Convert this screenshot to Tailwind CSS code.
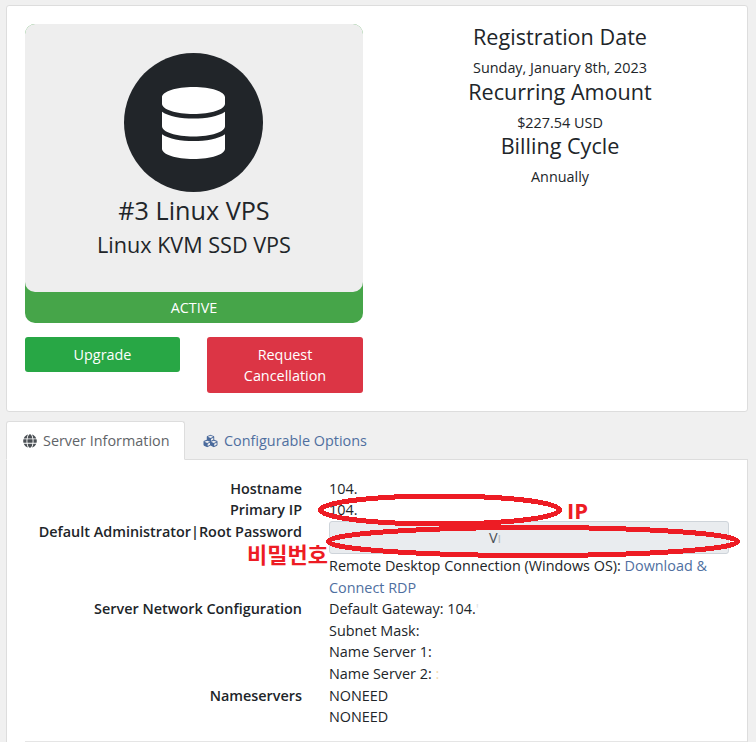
<!DOCTYPE html>
<html lang="en">
<head>
    <meta charset="UTF-8">
    <meta name="viewport" content="width=device-width, initial-scale=1.0">
    <script src="https://cdn.jsdelivr.net/npm/@tailwindcss/browser@4"></script>
    <title>Linux VPS</title>
</head>
<body class="bg-[#f0f0f0] font-['Open_Sans',sans-serif] text-[14.4px] leading-[21.6px] text-[#212529] overflow-hidden">
<div class="relative w-[756px] h-[742px] overflow-hidden pt-[5px] pl-[6px]">

    <!-- top card -->
    <div class="w-[742px] h-[407px] bg-white border border-[#ddd] rounded-[3px] pt-[18px] pl-[18px] flex">
        <div class="w-[338px]">
            <div class="bg-[#46a549] rounded-[10px] h-[299px]">
                <div class="h-[268px] bg-[#eeeeee] rounded-[10px] flex flex-col items-center pt-[29px]">
                    <div class="w-[139px] h-[139px] mr-[1px] rounded-full bg-[#212529] flex items-center justify-center">
                        <svg class="w-[63px] h-[72px] fill-white" viewBox="0 0 448 512"><path d="M448 73.143v45.714C448 159.143 347.667 192 224 192S0 159.143 0 118.857V73.143C0 32.857 100.333 0 224 0s224 32.857 224 73.143zM448 176v102.857C448 319.143 347.667 352 224 352S0 319.143 0 278.857V176c48.125 33.143 136.208 48.572 224 48.572S399.874 209.143 448 176zm0 160v102.857C448 479.143 347.667 512 224 512S0 479.143 0 438.857V336c48.125 33.143 136.208 48.572 224 48.572S399.874 369.143 448 336z"/></svg>
                    </div>
                    <div class="text-[25.2px] leading-[38px] mt-[-1px]">#3 Linux VPS</div>
                    <div class="text-[21.6px] leading-[30px] mt-[1px]">Linux KVM SSD VPS</div>
                </div>
                <div class="text-white text-center h-[31px] leading-[31px]">ACTIVE</div>
            </div>
            <div class="flex justify-between mt-[14px] text-white text-center">
                <div class="w-[155px] h-[35px] leading-[35px] bg-[#28a745] rounded-[3px]">Upgrade</div>
                <div class="w-[156px] h-[56px] pt-[7px] leading-[21px] bg-[#dc3545] rounded-[3px]">Request<br>Cancellation</div>
            </div>
        </div>
        <div class="w-[338px] ml-[28px] text-center">
            <div class="text-[21.6px] leading-[26px]">Registration Date</div>
            <div class="mt-[7px]">Sunday, January 8th, 2023</div>
            <div class="text-[21.6px] leading-[26px]">Recurring Amount</div>
            <div class="mt-[7px]">$227.54 USD</div>
            <div class="text-[21.6px] leading-[26px]">Billing Cycle</div>
            <div class="mt-[7px]">Annually</div>
        </div>
    </div>

    <!-- tabs -->
    <div class="flex h-[39px] mt-[9px] relative z-10">
        <div class="w-[179px] h-[39px] bg-white border border-[#ddd] border-b-white rounded-t-[3px] flex items-center pl-[16px] gap-[6px] text-[#5f6468]">
            <svg class="w-[14px] h-[14px] fill-[#4a4f54]" viewBox="0 0 496 512"><path d="M336.5 160C322 70.7 287.8 8 248 8s-74 62.7-88.5 152h177zM152 256c0 22.2 1.2 43.5 3.3 64h185.3c2.1-20.5 3.3-41.8 3.3-64s-1.2-43.5-3.3-64H155.3c-2.1 20.5-3.3 41.8-3.3 64zm324.7-96c-28.6-67.9-86.5-120.4-158-141.6 24.4 33.8 41.2 84.7 50 141.6h108zM177.2 18.4C105.8 39.6 47.8 92.1 19.3 160h108c8.7-56.9 25.5-107.8 49.9-141.6zM487.4 192H372.7c2.1 21 3.3 42.5 3.3 64s-1.2 43-3.3 64h114.6c5.5-20.5 8.6-41.8 8.6-64s-3.1-43.5-8.5-64zM120 256c0-21.5 1.2-43 3.3-64H8.6C3.2 212.5 0 233.8 0 256s3.2 43.5 8.6 64h114.6c-2-21-3.2-42.5-3.2-64zm39.5 96c14.5 89.3 48.7 152 88.5 152s74-62.7 88.5-152h-177zm159.3 141.6c71.4-21.2 129.4-73.7 158-141.6h-108c-8.8 56.9-25.6 107.8-50 141.6zM19.3 352c28.6 67.9 86.5 120.4 158 141.6-24.4-33.8-41.2-84.7-50-141.6h-108z"/></svg>
            <span>Server Information</span>
        </div>
        <div class="flex items-center pl-[18px] gap-[6px] text-[#4f6f9f]">
            <svg class="w-[15px] h-[14px] fill-[#4a6a9c]" viewBox="0 0 512 512"><path d="M488.6 250.2L392 214V105.5c0-15-9.3-28.4-23.4-33.7l-100-37.5c-8.1-3.1-17.1-3.1-25.3 0l-100 37.5c-14.1 5.3-23.4 18.7-23.4 33.7V214l-96.6 36.2C9.3 255.5 0 268.9 0 283.9V394c0 13.6 7.7 26.1 19.9 32.2l100 50c10.1 5.1 22.1 5.1 32.2 0l103.9-52 103.9 52c10.1 5.1 22.1 5.1 32.2 0l100-50c12.2-6.1 19.9-18.6 19.9-32.2V283.9c0-15-9.3-28.4-23.4-33.7zM358 214.8l-85 31.9v-68.2l85-37v73.3zM154 104.1l102-38.2 102 38.2v.6l-102 41.4-102-41.4v-.6zm84 291.1l-85 42.5v-79.1l85-38.8v75.4zm0-112l-102 41.4-102-41.4v-.6l102-38.2 102 38.2v.6zm240 112l-85 42.5v-79.1l85-38.8v75.4zm0-112l-102 41.4-102-41.4v-.6l102-38.2 102 38.2v.6z"/></svg>
            <span>Configurable Options</span>
        </div>
    </div>

    <!-- tab panel -->
    <div class="w-[742px] h-[290px] mt-[-1px] bg-white border border-[#ddd] pt-[18px] pr-[18px]">
        <div class="grid grid-cols-[295px_1fr] gap-x-[27px]">
            <div class="text-right font-semibold leading-[21px]">Hostname</div>
            <div class="leading-[21px]">104.</div>
            <div class="text-right font-semibold leading-[22px]">Primary IP</div>
            <div class="leading-[22px]">104.</div>
            <div class="text-right font-semibold">Default Administrator|Root Password</div>
            <div>
                <div class="h-[33px] mb-[1px] bg-[#e9ecef] border border-[#ced4da] rounded-[3px] text-center text-[#495057] leading-[31px] pr-[68px]">V<span class="text-[#b8bcc0]">ı</span></div>
                <div>Remote Desktop Connection (Windows OS): <span class="text-[#4f6f9f]">Download &amp; Connect RDP</span></div>
            </div>
            <div class="text-right font-semibold">Server Network Configuration</div>
            <div>
                <div>Default Gateway: 104.<span class="text-[#e2e2e2]">'</span></div>
                <div>Subnet Mask:</div>
                <div>Name Server 1:</div>
                <div>Name Server 2: <span class="text-[#f5dcb0]">:</span></div>
            </div>
            <div class="text-right font-semibold">Nameservers</div>
            <div>
                <div>NONEED</div>
                <div>NONEED</div>
            </div>
        </div>
        <div class="h-[1px] bg-[#e5e5e5] mt-[13.2px] ml-[18px] mr-[-18px]"></div>
    </div>

    <!-- red hand-drawn annotations over the page -->
    <svg class="absolute left-0 top-0 pointer-events-none" width="756" height="742" fill="none" stroke="#ed1c24" shape-rendering="crispEdges">
        <ellipse cx="440" cy="510" rx="119.5" ry="14" stroke-width="5"/>
        <ellipse cx="533" cy="541.5" rx="204.5" ry="14" stroke-width="5"/>
    </svg>
    <div class="absolute left-[567px] top-[495px] text-[22px] leading-[30px] font-bold text-[#ed1c24]">IP</div>
    <div class="absolute left-[247px] top-[542px] text-[22px] leading-[22px] font-bold text-[#ed1c24] font-['Noto_Sans_CJK_KR',sans-serif]">비밀번호</div>
</div>
</body>
</html>
